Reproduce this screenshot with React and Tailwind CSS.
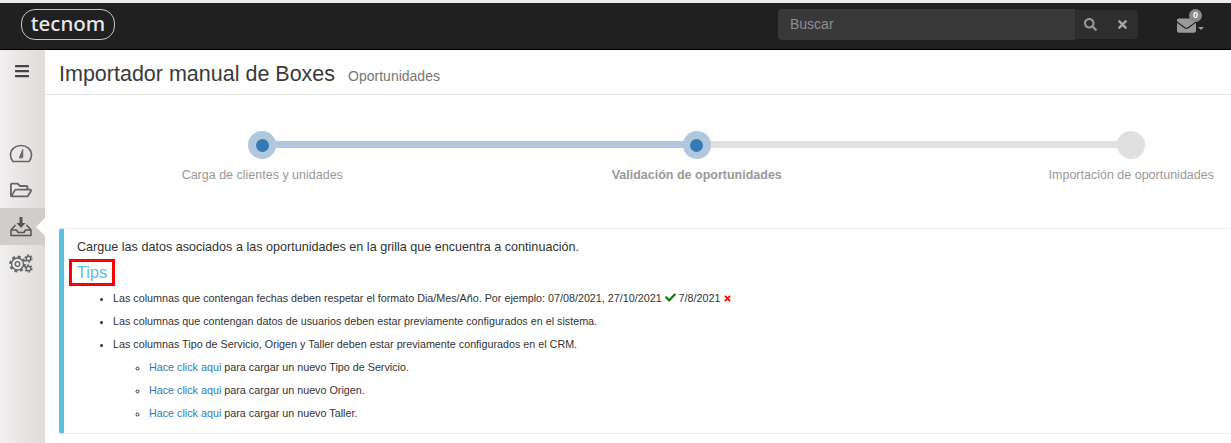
import React from 'react';
import { FaBars, FaSearch, FaTimes, FaCheck, FaEnvelope, FaRegFolderOpen } from 'react-icons/fa';

const GaugeIcon = () => (
    <svg width="24" height="20" viewBox="0 0 24 20" fill="none" stroke="#666" strokeWidth="1.6" strokeLinecap="round" strokeLinejoin="round">
        <path d="M4 17.500h16c1.500-1.800 2.500-4 2.500-6.500C22.500 5.500 17.800 1.500 12 1.500S1.500 5.500 1.500 11c0 2.500 1 4.700 2.500 6.500z" />
        <path d="M10.500 13.500 13.800 5.500 13.700 13.500z" fill="#666" strokeWidth="1" />
    </svg>
);

const TrayIcon = () => (
    <svg width="22" height="20" viewBox="0 0 22 20" fill="none" stroke="#555" strokeWidth="1.5" strokeLinejoin="round">
        <path d="M5.500 8 1 13v5.500h20V13l-4.500-5" />
        <path d="M1 13h5.500l1.500 2.500h6l1.500-2.500H21" />
        <path d="M9.500 0h3v6h3L11 11 6.500 6h3z" fill="#555" stroke="none" />
    </svg>
);

const CogsIcon = () => (
    <svg width="24" height="19" viewBox="0 0 24 19" fill="none" stroke="#666">
        <circle cx="8.500" cy="10" r="6" strokeWidth="1.400" />
        <circle cx="8.500" cy="10" r="7.300" strokeWidth="2.200" strokeDasharray="3 2.730" />
        <circle cx="8.500" cy="10" r="2.300" strokeWidth="1.300" />
        <circle cx="19.500" cy="4.500" r="2.300" strokeWidth="1.400" />
        <circle cx="19.500" cy="4.500" r="3.300" strokeWidth="1.700" strokeDasharray="1.700 1.750" />
        <circle cx="19.500" cy="14.500" r="2.300" strokeWidth="1.400" />
        <circle cx="19.500" cy="14.500" r="3.300" strokeWidth="1.700" strokeDasharray="1.700 1.750" />
    </svg>
);

const Step = ({ label, state, last }) => (
    <div className="flex flex-col items-center relative">
        {!last && (
            <div className={`absolute top-[10px] left-1/2 w-full h-[7px] ${state === 'done' ? 'bg-[#b0c7dd]' : 'bg-[#e0e0e0]'}`}></div>
        )}
        <div className={`relative w-[28px] h-[28px] rounded-full flex items-center justify-center ${state === 'pending' ? 'bg-[#e0e0e0]' : 'bg-[#b0c7dd]'}`}>
            {state !== 'pending' && <div className="w-[13px] h-[13px] rounded-full bg-[#337ab7]"></div>}
        </div>
        <span className={`mt-[7px] text-[12.5px] leading-[18px] text-[#999] ${state === 'active' ? 'font-bold' : ''}`}>{label}</span>
    </div>
);

const SubItem = ({ text }) => (
    <li className="mt-[9px] leading-[14px]">
        <a className="text-[#337ab7]">Hace click aqui</a> para cargar un nuevo {text}
    </li>
);

export default function App() {
    return (
        <div className="h-[443px] w-[1231px] overflow-hidden bg-white text-[#333] font-['Liberation_Sans',Arial,sans-serif] flex flex-col">
            <div className="h-[3px] bg-[#ececec]"></div>

            <header className="h-[47px] shrink-0 bg-[#202020] border-b border-black flex items-center pb-[3px]">
                <div className="ml-[21px] w-[94px] h-[31px] rounded-[14px] border border-[#c8c8c8] flex items-center justify-center">
                    <span className="text-[20.5px] leading-none text-[#e8e8e8] font-['Noto_Sans',sans-serif] font-medium -mt-[2px]">tecnom</span>
                </div>

                <div className="ml-[663px] w-[360px] h-[29px] rounded-[4px] bg-[#2e2e2e] flex items-center relative">
                    <div className="w-[297px] h-[31px] rounded-l-[4px] bg-[#383838] flex items-center pl-[12px] text-[14px] text-[#8f8f8f]">Buscar</div>
                    <FaSearch className="ml-[9px] text-[13px] text-[#999]" />
                    <FaTimes className="ml-[19px] text-[13px] text-[#a5a5a5]" />
                </div>

                <div className="ml-[39px] mt-[2px] relative flex items-center">
                    <FaEnvelope className="text-[19px] text-[#999]" />
                    <span className="absolute -top-[7px] left-[12px] w-[13px] h-[13px] rounded-full bg-[#8a8a8a] text-white text-[9px] font-bold leading-[13px] text-center">0</span>
                    <span className="ml-[2px] mt-[5px] w-0 h-0 border-x-[3px] border-x-transparent border-t-[3px] border-t-[#999]"></span>
                </div>
            </header>

            <div className="flex flex-1 min-h-0">
                <aside className="w-[45px] shrink-0 bg-gradient-to-r from-[#f1efef] to-[#dfdcda] flex flex-col items-center">
                    <FaBars className="mt-[13px] text-[16px] text-[#444] -ml-[1px]" />
                    <div className="mt-[57px] w-full flex flex-col">
                        <div className="h-[36px] flex items-center justify-center -ml-[3px]"><GaugeIcon /></div>
                        <div className="h-[36px] flex items-center justify-center -ml-[3px]"><FaRegFolderOpen className="text-[22px] text-[#666]" /></div>
                        <div className="h-[37px] bg-[#d0cdcb] relative flex items-center justify-center">
                            <span className="-ml-[3px]"><TrayIcon /></span>
                            <span className="absolute right-0 top-[10px] w-0 h-0 border-y-[9px] border-y-transparent border-r-[9px] border-r-white"></span>
                        </div>
                        <div className="h-[36px] flex items-center justify-center -ml-[3px]"><CogsIcon /></div>
                    </div>
                </aside>

                <main className="flex-1 min-w-0 overflow-hidden">
                    <div className="h-[45px] border-b border-[#e7e7e7] pl-[14px] flex items-baseline pt-[9px]">
                        <h1 className="text-[21.5px] leading-[30px] text-[#3a3a3a]">Importador manual de Boxes</h1>
                        <span className="ml-[13px] text-[14px] text-[#777]">Oportunidades</span>
                    </div>

                    <div className="pt-[36px] grid grid-cols-[repeat(3,434.5px)] h-[133px]">
                        <Step label="Carga de clientes y unidades" state="done" />
                        <Step label="Validación de oportunidades" state="active" />
                        <Step label="Importación de oportunidades" state="pending" last />
                    </div>

                    <section className="ml-[14px] h-[206px] border-l-[5px] border-l-[#5bc0de] border-y border-y-[#eee] rounded-l-[3px] pl-[13px] pt-[10px]">
                        <p className="text-[12.6px] leading-[17px] text-[#333]">Cargue las datos asociados a las oportunidades en la grilla que encuentra a continuación.</p>
                        <div className="-ml-[8px] mt-[3px] w-[46px] h-[27px] border-[3px] border-[#f00] flex items-center justify-center text-[16.5px] text-[#5bc0de]">Tips</div>
                        <ul className="ml-[36px] list-disc text-[10.75px] text-[#333]">
                            <li className="mt-[5px] leading-[14px]">
                                Las columnas que contengan fechas deben respetar el formato Dia/Mes/Año. Por ejemplo: 07/08/2021, 27/10/2021 <FaCheck className="inline text-[11px] text-[#008000] align-[-1px]" /> 7/8/2021 <FaTimes className="inline text-[9px] text-[#f00] align-[-1px]" />
                            </li>
                            <li className="mt-[9px] leading-[14px]">Las columnas que contengan datos de usuarios deben estar previamente configurados en el sistema.</li>
                            <li className="mt-[9px] leading-[14px]">
                                Las columnas Tipo de Servicio, Origen y Taller deben estar previamente configurados en el CRM.
                                <ul className="ml-[36px] list-[circle]">
                                    <SubItem text="Tipo de Servicio." />
                                    <SubItem text="Origen." />
                                    <SubItem text="Taller." />
                                </ul>
                            </li>
                        </ul>
                    </section>
                </main>
            </div>
        </div>
    );
}
